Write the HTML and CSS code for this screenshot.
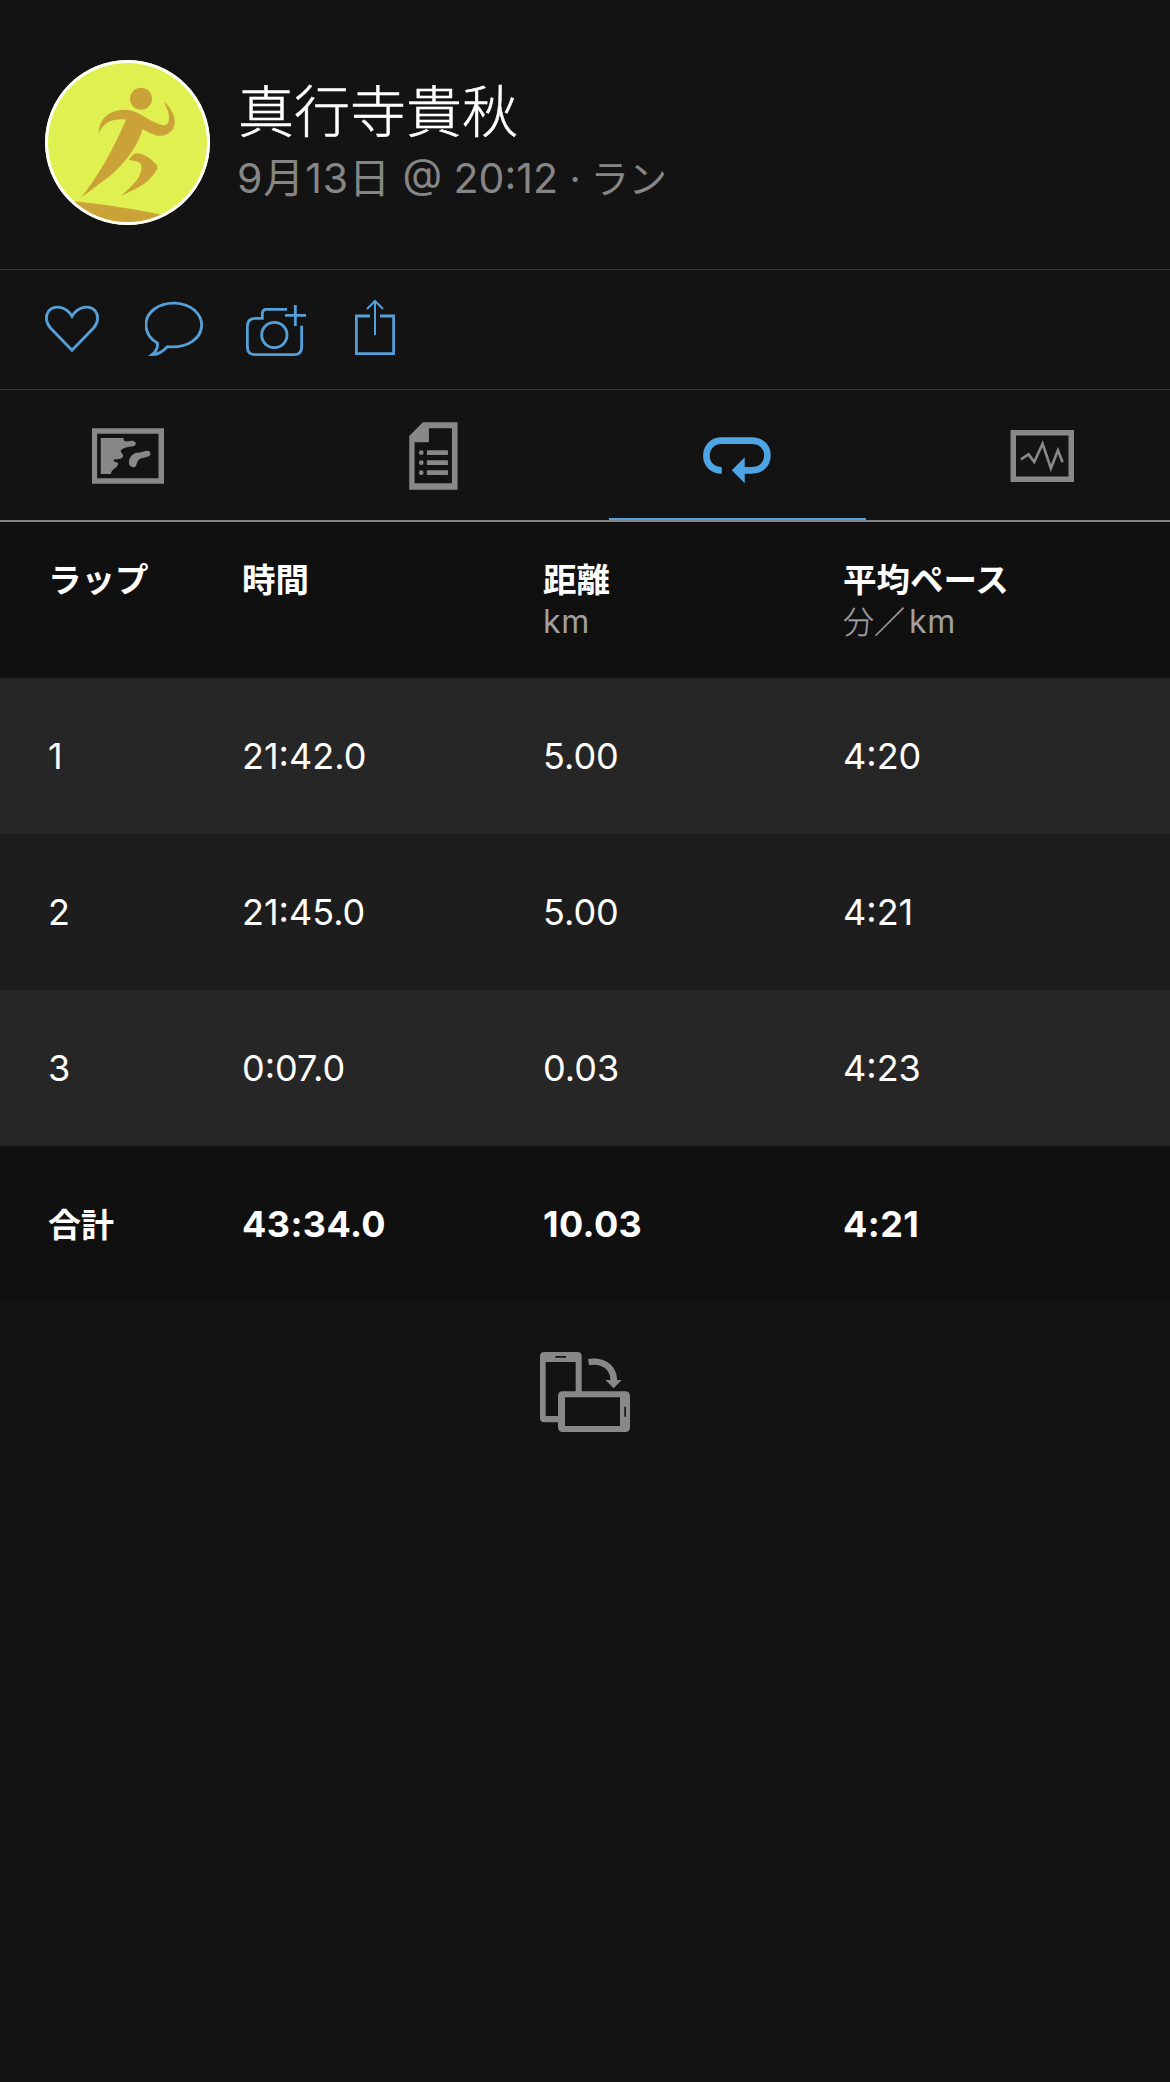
FILE: index.html
```html
<!DOCTYPE html>
<html lang="ja">
<head>
<meta charset="utf-8">
<title>ラップ</title>
<link rel="stylesheet" href="styles.css">
</head>
<body>
<header class="profile">
  <svg class="avatar" viewBox="45 30 495 495">
    <defs><clipPath id="disc"><circle cx="292.500" cy="277.500" r="243"/></clipPath></defs>
    <circle cx="292.500" cy="277.500" r="247" fill="#fffff4"/>
    <circle cx="292.500" cy="277.500" r="239" fill="#dff050"/>
    <g fill="#cba238">
      <circle cx="333" cy="146" r="33"/>
      <path d="M207 251C205 208 236 181 280 179C315 178 337 198 366 213C393 226 410 234 416 214C421 194 410 173 402 155C422 172 436 196 434 219C432 244 412 258 388 257C368 256 352 244 338 237C322 290 288 334 246 373L153 443C204 379 248 302 288 209C247 204 217 219 207 251Z"/>
      <path d="M297 330Q308 309 322 310Q350 313 379 343Q385 349 382 356Q363 392 322 414L273 438Q301 416 320 391Q334 372 335 350Q333 336 316 333Z"/>
      <path d="M120 453Q280 469 386 493H410V530H150Z" clip-path="url(#disc)"/>
    </g>
    <circle cx="292.500" cy="277.500" r="243" fill="none" stroke="#fffff4" stroke-width="9"/>
  </svg>
  <div class="who">
    <h1 class="name">真行寺貴秋</h1>
    <p class="meta"><span class="date">9月13日</span> @ 20:12 <span class="sport">· ラン</span></p>
  </div>
</header>

<div class="actions">
  <svg width="55" height="60" viewBox="45 114 165 180"><path d="M126 271L62 205C46 188 46 165 57 152C73 135 108 137 126 169C144 137 179 135 195 152C206 165 206 188 190 205Z"/></svg>
  <svg width="59" height="60" viewBox="345 114 177 180"><path d="M382 249C337 222 339 172 373 147C408 122 463 124 495 152C525 180 520 222 487 244C465 259 436 262 412 260C400 273 384 284 366 284C378 274 385 264 382 249Z"/></svg>
  <svg width="61" height="60" viewBox="648 114 183 180"><path d="M771 148H710Q697 148 697 161V175H676Q652 175 652 199V260Q652 284 676 284H791Q815 284 815 260V197"/><circle cx="733" cy="225" r="38"/><path d="M796 135V198M765 166H828"/></svg>
  <svg width="40" height="60" viewBox="975 114 120 180"><path d="M1020 168H979V281H1091V168H1050"/><path class="thin" d="M1035 225V123M1011 147L1035 123L1059 147"/></svg>
</div>

<nav class="tabs">
  <div class="tab">
    <svg viewBox="96.750 60 216 216"><path class="line" d="M104 93H304.500V243H104Z"/><path class="fill" d="M123 114H192Q189 123 198 124C208 126 213 121 221 123C232 126 230 137 220 139C206 141 196 141 187 148C176 155 191 160 190 168C189 177 176 178 165 178C157 181 163 186 174 188C178 194 170 202 163 206C156 211 155 216 153 222H123Z"/><path class="fill" d="M208 190C206 175 216 161 231 158C244 158 254 152 264 152C275 154 275 167 264 170L245 175C233 179 232 190 229 197C224 205 208 202 208 190Z"/></svg>
  </div>
  <div class="tab">
    <svg viewBox="1010.250 60 216 216"><path class="fill" fill-rule="evenodd" d="M1088 67H1192V269H1047V108ZM1106 85V127H1063V250H1175V85Z"/><path class="fill" d="M1100 151H1163V165H1100ZM1100 181H1163V195H1100ZM1100 211H1163V225H1100Z"/><circle class="fill" cx="1083" cy="158" r="7"/><circle class="fill" cx="1083" cy="188" r="7"/><circle class="fill" cx="1083" cy="218" r="7"/></svg>
  </div>
  <div class="tab active">
    <svg viewBox="303.750 60 216 216"><path class="line" d="M366 211C339 211 320 193 320 167C320 140 339 122 366 122H456C484 122 503 140 503 166C503 193 484 211 456 211H430"/><path class="fill" d="M435 172V250L396 211Z"/></svg>
  </div>
  <div class="tab">
    <svg viewBox="1217.250 60 216 216"><path class="line" d="M1239 98.500H1413V237.500H1239Z"/><path class="pulse" d="M1262 178L1285 163L1302 186L1327 131L1352 205L1373 151L1387 187"/></svg>
  </div>
</nav>

<main>
  <div class="row head">
    <div>ラップ</div>
    <div>時間</div>
    <div>距離<span class="unit"><span class="km">km</span></span></div>
    <div>平均ペース<span class="unit"><span class="per">分／</span><span class="km">km</span></span></div>
  </div>
  <div class="row odd"><div>1</div><div>21:42.0</div><div>5.00</div><div>4:20</div></div>
  <div class="row even"><div>2</div><div>21:45.0</div><div>5.00</div><div>4:21</div></div>
  <div class="row odd"><div>3</div><div>0:07.0</div><div>0.03</div><div>4:23</div></div>
  <div class="row total"><div class="label">合計</div><div>43:34.0</div><div>10.03</div><div>4:21</div></div>
</main>

<svg class="rotate" viewBox="60 63 270 246">
  <path fill-rule="evenodd" d="M73 66H172Q185 66 185 79V186H167V96H77V258H116V277H73Q60 277 60 264V79Q60 66 73 66ZM106 78V83H138V78Z"/>
  <path fill-rule="evenodd" d="M128 184H316Q330 184 330 198V292Q330 306 316 306H128Q114 306 114 292V198Q114 184 128 184ZM135 202V288H300V202ZM313 230V260H318V230Z"/>
  <path d="M204 87C252 78 292 106 291 150H305L281 175L256 150H271C272 119 244 98 207 106Z"/>
</svg>
</body>
</html>
```
FILE: styles.css
```css
* { box-sizing: border-box; }

body {
  margin: 0;
  min-height: 2082px;
  background: #131313;
  color: #fff;
  font-family: Inter, "Noto Sans CJK JP", sans-serif;
}

svg { display: block; flex: none; }

.profile {
  display: flex;
  gap: 27px;
  height: 270px;
  padding: 60px 45px 0;
  border-bottom: 1px solid #3a3a3a;
}
.avatar { width: 165px; height: 165px; }
.who { padding-top: 15px; white-space: nowrap; }
.name {
  margin: 0;
  font-size: 56px;
  line-height: 74px;
  font-weight: 300;
  text-indent: 1px;
  -webkit-text-stroke: 0.500px currentColor;
}
.meta {
  margin: 0;
  color: #868686;
  font-size: 41px;
  line-height: 58px;
}
.date { letter-spacing: 0.900px; }
.sport { font-size: 38.500px; letter-spacing: -0.500px; }

.actions {
  display: grid;
  grid-template-columns: 100px 101px 109px auto;
  height: 120px;
  padding: 28px 45px 0;
  border-bottom: 1px solid #3a3a3a;
}
.actions svg {
  fill: none;
  stroke: #56a0da;
  stroke-width: 8.500;
}
.actions .thin { stroke-width: 6; }

.tabs {
  display: flex;
  justify-content: space-between;
  height: 132px;
  border-bottom: 2px solid #858585;
}
.tab {
  display: flex;
  justify-content: center;
  width: 256.500px;
  padding-top: 30px;
  color: #888;
}
.tab.active { color: #4fa5e4; border-bottom: 2px solid #579fda; }
.tab svg { width: 72px; height: 72px; }
.fill { fill: currentColor; }
.line { fill: none; stroke: currentColor; stroke-width: 16.500; }
.active .line { stroke-width: 20; }
.pulse {
  fill: none;
  stroke: currentColor;
  stroke-width: 8;
}

.row {
  display: grid;
  grid-template-columns: 194px 301px 300px 1fr;
  align-items: center;
  height: 156px;
  padding-left: 48px;
  font-size: 36px;
}
.head {
  align-items: start;
  padding-top: 37px;
  background: #101010;
  font-size: 33.500px;
  font-weight: 700;
  line-height: 43px;
}
.unit {
  display: block;
  color: #a0a0a0;
  font-size: 31px;
  font-weight: 300;
  line-height: 40px;
}
.per {
  margin-right: 4px;
  -webkit-text-stroke: 0.300px currentColor;
}
.km {
  font-size: 32px;
  font-weight: 400;
  letter-spacing: 0.600px;
}
.odd { background: #262626; }
.even { background: #1d1d1d; }
.total {
  background: #101010;
  font-weight: 700;
  letter-spacing: 0.400px;
}
.label {
  padding-bottom: 2px;
  font-size: 33px;
  letter-spacing: 0;
}

.rotate {
  width: 90px;
  height: 82px;
  margin: 49px auto 0;
  fill: #888;
}
```
